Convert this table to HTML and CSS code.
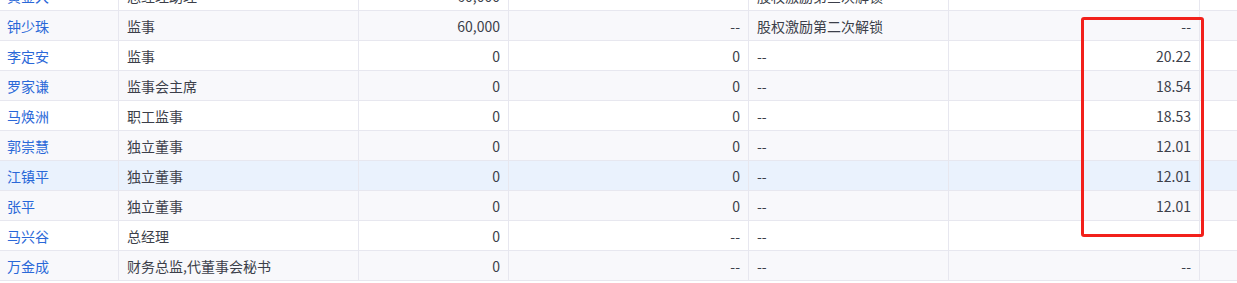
FILE: index.html
```html
<!DOCTYPE html>
<html lang="zh-CN">
<head>
<meta charset="utf-8">
<title>高管持股</title>
<link rel="stylesheet" href="styles.css">
</head>
<body>
<div class="viewport">
  <div class="table">
    <div class="row">
      <div class="cell name">黄金大</div>
      <div class="cell">总经理助理</div>
      <div class="cell num">60,000</div>
      <div class="cell num"></div>
      <div class="cell">股权激励第三次解锁</div>
      <div class="cell num"></div>
      <div class="cell"></div>
    </div>
    <div class="row alt">
      <div class="cell name">钟少珠</div>
      <div class="cell">监事</div>
      <div class="cell num">60,000</div>
      <div class="cell num">--</div>
      <div class="cell">股权激励第二次解锁</div>
      <div class="cell num">--</div>
      <div class="cell"></div>
    </div>
    <div class="row">
      <div class="cell name">李定安</div>
      <div class="cell">监事</div>
      <div class="cell num">0</div>
      <div class="cell num">0</div>
      <div class="cell">--</div>
      <div class="cell num">20.22</div>
      <div class="cell"></div>
    </div>
    <div class="row alt">
      <div class="cell name">罗家谦</div>
      <div class="cell">监事会主席</div>
      <div class="cell num">0</div>
      <div class="cell num">0</div>
      <div class="cell">--</div>
      <div class="cell num">18.54</div>
      <div class="cell"></div>
    </div>
    <div class="row">
      <div class="cell name">马焕洲</div>
      <div class="cell">职工监事</div>
      <div class="cell num">0</div>
      <div class="cell num">0</div>
      <div class="cell">--</div>
      <div class="cell num">18.53</div>
      <div class="cell"></div>
    </div>
    <div class="row alt">
      <div class="cell name">郭崇慧</div>
      <div class="cell">独立董事</div>
      <div class="cell num">0</div>
      <div class="cell num">0</div>
      <div class="cell">--</div>
      <div class="cell num">12.01</div>
      <div class="cell"></div>
    </div>
    <div class="row hover">
      <div class="cell name">江镇平</div>
      <div class="cell">独立董事</div>
      <div class="cell num">0</div>
      <div class="cell num">0</div>
      <div class="cell">--</div>
      <div class="cell num">12.01</div>
      <div class="cell"></div>
    </div>
    <div class="row alt">
      <div class="cell name">张平</div>
      <div class="cell">独立董事</div>
      <div class="cell num">0</div>
      <div class="cell num">0</div>
      <div class="cell">--</div>
      <div class="cell num">12.01</div>
      <div class="cell"></div>
    </div>
    <div class="row">
      <div class="cell name">马兴谷</div>
      <div class="cell">总经理</div>
      <div class="cell num">0</div>
      <div class="cell num">--</div>
      <div class="cell">--</div>
      <div class="cell num"></div>
      <div class="cell"></div>
    </div>
    <div class="row alt">
      <div class="cell name">万金成</div>
      <div class="cell">财务总监,代董事会秘书</div>
      <div class="cell num">0</div>
      <div class="cell num">--</div>
      <div class="cell">--</div>
      <div class="cell num">--</div>
      <div class="cell"></div>
    </div>
  </div>
  <div class="highlight-box"></div>
</div>
</body>
</html>
```
FILE: styles.css
```css
* { box-sizing: border-box; }
html, body { margin: 0; padding: 0; background: #ffffff; }
body {
  font-family: "Noto Sans CJK SC", "Noto Sans", sans-serif;
  font-size: 14px;
  color: #3c3f4a;
}
.viewport {
  position: relative;
  width: 1237px;
  height: 283px;
  overflow: hidden;
  background: #ffffff;
}
.table {
  margin-top: -19px;
  display: flex;
  flex-direction: column;
}
.row {
  display: grid;
  grid-template-columns: 119px 240px 150px 240px 200px 251px 1fr;
  height: 30px;
  border-bottom: 1px solid #e7e7ef;
  background: #ffffff;
}
.row.alt { background: #f8f8fb; }
.row.hover { background: #eaf2fd; }
.cell {
  border-right: 1px solid #e7e7ef;
  padding: 0 8px;
  line-height: 29px;
  padding-top: 1px;
  white-space: nowrap;
  overflow: hidden;
}
.cell.name { padding-left: 7px; color: #2a68d8; }
.cell.num { text-align: right; }
.cell:last-child { border-right: none; }
.highlight-box {
  position: absolute;
  left: 1081px;
  top: 17px;
  width: 123px;
  height: 220px;
  border: 3px solid #f2201b;
  border-radius: 3px;
  pointer-events: none;
}
```
